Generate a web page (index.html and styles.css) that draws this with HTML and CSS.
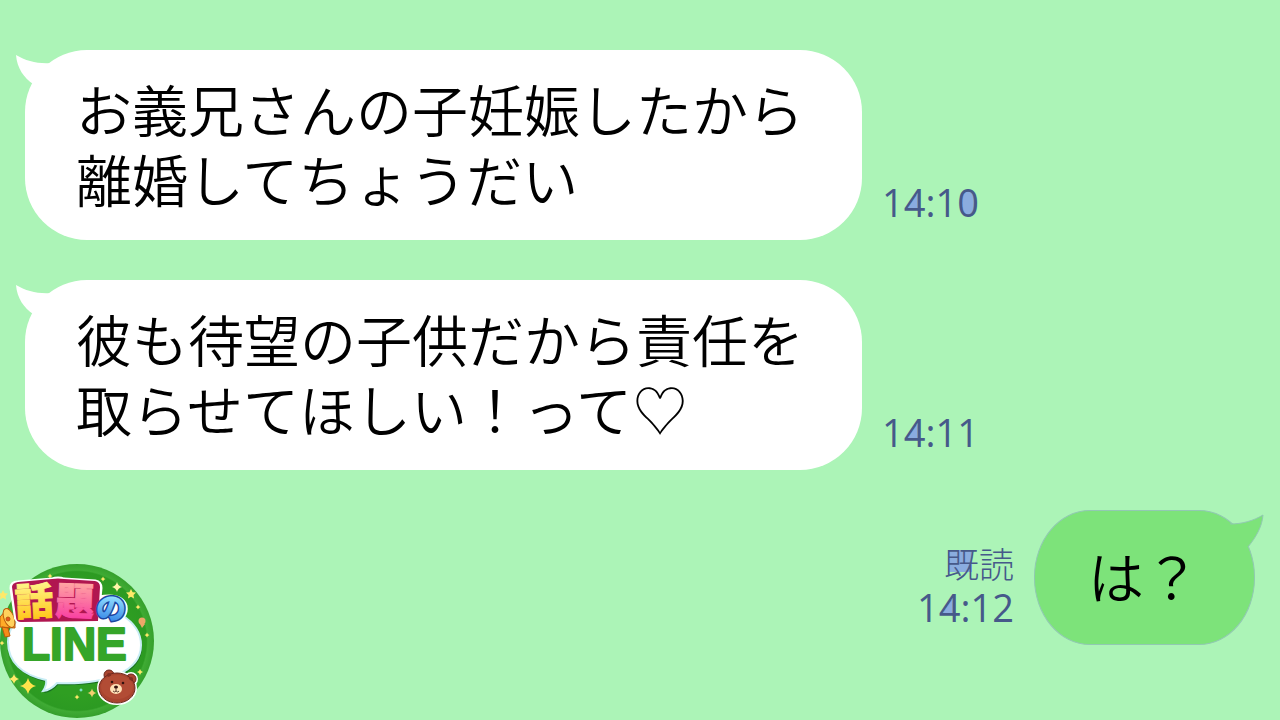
FILE: index.html
```html
<!DOCTYPE html>
<html lang="ja">
  <head>
    <meta charset="UTF-8" />
    <meta name="viewport" content="width=device-width, initial-scale=1.0" />
    <title>話題のLINE</title>
    <link rel="stylesheet" href="styles.css">
  </head>
  <body>
    <main class="chat">
      <div class="message">
        <p class="bubble">
          <svg class="tail" viewBox="0 0 40 34"><path d="M0 1C10 7 22 10 35 9L40 20L17 30C8 24 1 14 0 1Z" /></svg>
          お義兄さんの子妊娠したから<br />離婚してちょうだい
        </p>
        <div class="meta"><time>1<span class="four">4</span>:1<span class="zero">0</span></time></div>
      </div>

      <div class="message">
        <p class="bubble">
          <svg class="tail" viewBox="0 0 40 34"><path d="M0 1C10 7 22 10 35 9L40 20L17 30C8 24 1 14 0 1Z" /></svg>
          彼も待望の子供だから責任を<br />取らせてほしい！って<span class="heart">♡</span>
        </p>
        <div class="meta"><time>1<span class="four">4</span>:11</time></div>
      </div>

      <div class="message mine">
        <p class="bubble">
          <svg class="tail" viewBox="0 0 44 38"><path d="M8 13C20 13 31 10 41 4C40 16 34 26 26 36" /></svg>
          は？
        </p>
        <div class="meta">
          <span><span class="read">既</span>読</span>
          <time>1<span class="four">4</span>:12</time>
        </div>
      </div>
    </main>

    <svg class="logo" viewBox="0 0 156 156" role="img" aria-label="話題のLINE">
      <defs>
        <radialGradient id="green" cx="50%" cy="50%" r="50%">
          <stop offset="70%" stop-color="#2f9e22" />
          <stop offset="90%" stop-color="#2c9a22" />
          <stop offset="92%" stop-color="#3fab34" />
          <stop offset="100%" stop-color="#35a02c" />
        </radialGradient>
        <linearGradient id="yellow" x2="0" y2="1">
          <stop offset="0.2" stop-color="#fff68a" />
          <stop offset="0.9" stop-color="#ffc516" />
        </linearGradient>
        <linearGradient id="pink" x2="0" y2="1">
          <stop offset="0.2" stop-color="#ffa9a2" />
          <stop offset="0.9" stop-color="#f83ba2" />
        </linearGradient>
        <linearGradient id="blue" x2="0" y2="1">
          <stop offset="0.3" stop-color="#8edcff" />
          <stop offset="0.9" stop-color="#2f7fe4" />
        </linearGradient>
        <path id="spark" d="M0 -5Q1 -1 5 0Q1 1 0 5Q-1 1 -5 0Q-1 -1 0 -5Z" />
        <path id="star" d="M0 -5L1.6 -1.8L5 -1.5L2.5 1L3 4.5L0 2.8L-3 4.5L-2.5 1L-5 -1.5L-1.6 -1.8Z" />
      </defs>

      <circle cx="77" cy="77" r="77" fill="url(#green)" />
      <path d="M75 39C112 39 141 57 141 81C141 107 108 121 57 119Q51 126 43 127Q47 121 46 116C22 111 8 98 8 78C8 54 37 39 75 39Z" fill="#176f22" transform="translate(1 2)" />
      <path d="M75 39C112 39 141 57 141 81C141 107 108 121 57 119Q51 126 43 127Q47 121 46 116C22 111 8 98 8 78C8 54 37 39 75 39Z" fill="#fff" stroke="#c8edf5" stroke-width="2" />

      <!-- sparkles -->
      <g fill="#ffe969">
        <use href="#star" x="131" y="30" />
        <use href="#star" x="3" y="31" />
        <use href="#spark" transform="translate(28 122) scale(1.6)" fill="#ffe34b" />
        <use href="#spark" transform="translate(117 23)" fill="#fff5a8" />
        <use href="#spark" transform="translate(14 115)" />
        <use href="#spark" transform="translate(92 129) scale(.9)" fill="#f3cf70" />
        <use href="#spark" transform="translate(50 12) scale(.5)" />
        <use href="#spark" transform="translate(103 15) scale(.5)" />
        <use href="#spark" transform="translate(138 43) scale(.5)" />
        <use href="#spark" transform="translate(147 71) scale(.5)" />
        <use href="#spark" transform="translate(140 108) scale(.6)" />
        <use href="#spark" transform="translate(77 133) scale(.5)" />
        <use href="#spark" transform="translate(81 126) scale(.4)" fill="#84eadc" />
        <use href="#spark" transform="translate(2 79) scale(.5)" />
      </g>
      <circle cx="142" cy="57" r="3.5" fill="#eda768" />
      <path d="M140 60l2 4 3-4" fill="#eda768" />

      <!-- megaphone -->
      <g stroke="#b95a0b" stroke-width="1">
        <path d="M0 53L8 44Q16 53 15 64L0 63Z" fill="#ffab27" />
        <path d="M2 63L5 73L10 72L8 64Z" fill="#f68b18" />
        <ellipse cx="9" cy="54" rx="5" ry="10" fill="#ffd15c" transform="rotate(-22 9 54)" />
        <circle cx="8" cy="55" r="2" fill="#e75120" />
      </g>

      <!-- title -->
      <path d="M12 24Q12 19 18 19L52 16Q58 14 64 16L95 18Q100 19 100 24L99 34Q121 30 125 42Q127 54 113 56L22 57Q16 57 16 51Z" fill="#fff" stroke="#fff" stroke-width="5" />
      <path d="M12 23Q12 19 18 18L52 15Q58 14 64 15L95 17Q100 18 100 23L98 57L21 58Q16 58 16 53Z" fill="#b01650" />
      <text class="title" x="15" y="51" fill="url(#yellow)" stroke="url(#yellow)" transform="rotate(-3 34 38)">話</text>
      <text class="title" x="56" y="51" fill="url(#pink)" stroke="url(#pink)" transform="rotate(2 76 38)">題</text>
      <text class="title title-small title-edge" x="96" y="55" transform="rotate(6 110 44)" fill="url(#blue)">の</text>
      <text class="line" x="22" y="96">LINE</text>

      <!-- bear -->
      <g fill="#a9442f" stroke="#fff" stroke-width="4">
        <circle cx="109" cy="111" r="5" />
        <circle cx="131" cy="115" r="5" />
        <ellipse cx="117" cy="124" rx="18" ry="15" />
      </g>
      <g fill="#a9442f" stroke="#6c281e" stroke-width="1">
        <circle cx="109" cy="111" r="5" />
        <circle cx="131" cy="115" r="5" />
        <ellipse cx="117" cy="124" rx="18" ry="15" />
      </g>
      <circle cx="109" cy="111" r="2" fill="#7f2e22" />
      <circle cx="131" cy="115" r="2" fill="#7f2e22" />
      <ellipse cx="117" cy="123" rx="16" ry="12" fill="#b24c35" />
      <ellipse cx="116" cy="125" rx="6" ry="5" fill="#ffe0b6" />
      <circle cx="112" cy="118" r="1.3" fill="#35120f" />
      <circle cx="123" cy="119" r="1.3" fill="#35120f" />
      <ellipse cx="116" cy="123" rx="2" ry="1.5" fill="#35120f" />
      <path d="M116 124v3M113 127q2 2 3 0q2 2 3 0" fill="none" stroke="#35120f" stroke-width="0.8" />
    </svg>
  </body>
</html>
```
FILE: styles.css
```css
body {
  margin: 0;
  background-color: #acf4b7;
  color: #000;
  font-family: "Noto Sans CJK JP", sans-serif;
}

.chat {
  display: flex;
  flex-direction: column;
  gap: 40px;
  padding: 50px 25px;
}

.message {
  display: flex;
  align-items: flex-end;
  gap: 20px;
}

.mine {
  flex-direction: row-reverse;
}

.bubble {
  position: relative;
  margin: 0;
  padding: 23px 58px 27px 51px;
  border-radius: 62px;
  background-color: #fff;
  font-size: 56px;
  font-weight: 350;
  line-height: 70px;
}

.heart {
  font-weight: 300;
}

.mine .bubble {
  padding: 29px 54px 34px 53px;
  border: 1px solid #91c9b2;
  border-radius: 56px / 67px;
  background-color: #7de37a;
}

.tail {
  position: absolute;
  top: 4px;
  left: -9px;
  width: 40px;
  fill: #fff;
}

.mine .tail {
  top: 0;
  left: auto;
  right: -12px;
  width: 44px;
  fill: #7de37a;
  stroke: #91c9b2;
}

/* time and read mark */
.meta {
  display: flex;
  flex-direction: column;
  align-items: flex-end;
  padding-bottom: 15px;
  color: #46598a;
  font-size: 35px;
  font-weight: 300;
  line-height: 45px;
}

time {
  font-family: "Open Sans", sans-serif;
  font-size: 38px;
  font-weight: 400;
}

.four {
  background: linear-gradient(to bottom right, transparent 50%, #8aacdf 50%) 3px 15px / 12px 18px no-repeat;
}

.zero {
  background: radial-gradient(closest-side, #8aacdf 96%, transparent) center / 16px 26px no-repeat;
}

.read {
  background: linear-gradient(#8aacdf, #8aacdf) 4px 13px / 24px 22px no-repeat;
}

.logo {
  position: absolute;
  left: 0;
  bottom: 0;
  width: 156px;
}

.title {
  font-size: 38px;
  font-weight: 900;
  stroke-width: 1px;
}

.title-small {
  font-size: 30px;
}

.title-edge {
  stroke: #1d469f;
  stroke-width: 3px;
  paint-order: stroke;
}

.line {
  font-family: "Liberation Sans", sans-serif;
  font-size: 46px;
  font-weight: bold;
  fill: #35a529;
  stroke: #35a529;
  stroke-width: 2px;
  stroke-linejoin: round;
}
```
